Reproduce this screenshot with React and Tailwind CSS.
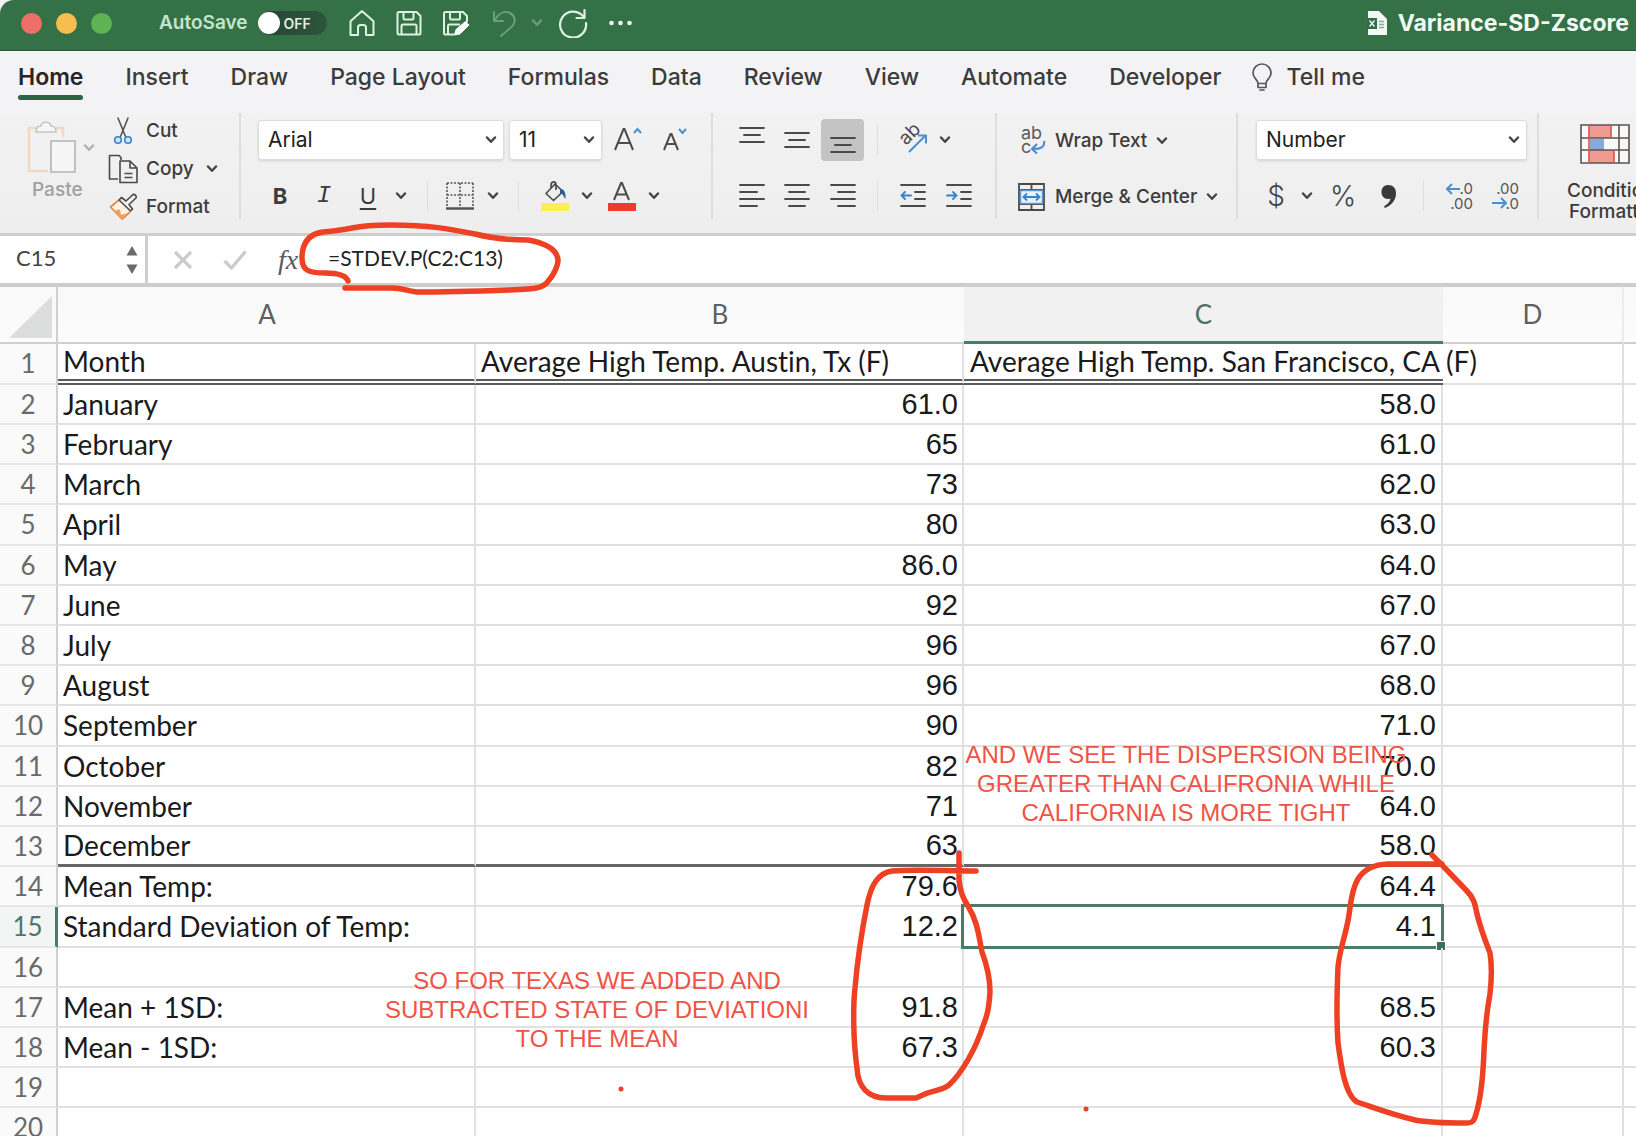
import React from "react";

const TABS = ["Home", "Insert", "Draw", "Page Layout", "Formulas", "Data", "Review", "View", "Automate", "Developer"];

const ROWS = [
  ["January", "61.0", "58.0"],
  ["February", "65", "61.0"],
  ["March", "73", "62.0"],
  ["April", "80", "63.0"],
  ["May", "86.0", "64.0"],
  ["June", "92", "67.0"],
  ["July", "96", "67.0"],
  ["August", "96", "68.0"],
  ["September", "90", "71.0"],
  ["October", "82", "70.0"],
  ["November", "71", "64.0"],
  ["December", "63", "58.0"],
  ["Mean Temp:", "79.6", "64.4"],
  ["Standard Deviation of Temp:", "12.2", "4.1"],
  ["", "", ""],
  ["Mean + 1SD:", "91.8", "68.5"],
  ["Mean - 1SD:", "67.3", "60.3"],
  ["", "", ""],
  ["", "", ""],
];

function Chevron({ className = "text-[#444]" }) {
  return (
    <svg viewBox="0 0 12 8" className={`h-2 w-3 shrink-0 ${className}`} fill="none" stroke="currentColor" strokeWidth="2.4" strokeLinecap="round" strokeLinejoin="round">
      <path d="M2 1.5 6 5.800 10 1.5" />
    </svg>
  );
}

function Lines({ rows }) {
  return (
    <svg viewBox="0 0 26 26" className="size-[26px]" stroke="#4a4a4a" strokeWidth="1.8" strokeLinecap="round">
      {rows.map(([y, x1, x2]) => (
        <path key={y} d={`M${x1} ${y}H${x2}`} />
      ))}
    </svg>
  );
}

function IconButton({ label, className = "", children }) {
  return (
    <button type="button" aria-label={label} className={`flex shrink-0 items-center justify-center ${className}`}>
      {children}
    </button>
  );
}

function Combo({ label, options, className }) {
  return (
    <div className={`relative flex h-10 shrink-0 items-center rounded-[3px] border border-[#dcdcdc] bg-white shadow-sm ${className}`}>
      <select aria-label={label} className="h-full w-full appearance-none bg-transparent px-[9px] text-[21px] text-[#222] outline-none">
        {options.map((o) => (
          <option key={o}>{o}</option>
        ))}
      </select>
      <Chevron className="pointer-events-none absolute right-[6px] text-[#444]" />
    </div>
  );
}

function Rule() {
  return <div className="h-[30px] w-px shrink-0 bg-[#dedede]" />;
}

function GroupRule() {
  return <div className="h-[106px] w-0.5 shrink-0 bg-[#dedede]" />;
}

function TitleBar() {
  return (
    <header className="flex h-[51px] shrink-0 items-center rounded-tl-[14px] border-b border-[#2b5a3b] bg-[#357147] pb-1 pl-[21px] text-[#dcf3e2]">
      <div className="flex gap-[14px]">
        <button type="button" aria-label="Close" className="size-[21px] rounded-full bg-[#ee6f66]" />
        <button type="button" aria-label="Minimize" className="size-[21px] rounded-full bg-[#f6be4f]" />
        <button type="button" aria-label="Zoom" className="size-[21px] rounded-full bg-[#5eb353]" />
      </div>
      <span id="autosave" className="ml-[47px] text-[19px] font-semibold text-[#c5e4cd]">AutoSave</span>
      <button type="button" role="switch" aria-checked="false" aria-labelledby="autosave" className="ml-[10px] flex h-6 w-[69px] items-center gap-1 rounded-full bg-linear-to-r from-[#2a4335] to-[#2c553b]">
        <span className="size-[22px] rounded-full bg-white" />
        <span className="text-[14px] font-semibold text-[#dfeee3]">OFF</span>
      </button>
      <div className="ml-[20px] flex items-center">
        <IconButton label="Home" className="w-[31px]">
          <svg viewBox="0 0 28 28" className="size-7" fill="none" stroke="currentColor" strokeWidth="2" strokeLinejoin="round">
            <path d="M2.5 12.2 14 2l11.500 10.200V26H18v-7.500a2.500 2.500 0 0 0-2.500-2.500h-3a2.500 2.500 0 0 0-2.500 2.500V26H2.500z" />
          </svg>
        </IconButton>
        <IconButton label="Save" className="ml-[16px] w-[31px]">
          <svg viewBox="0 0 28 28" className="size-7" fill="none" stroke="currentColor" strokeWidth="2" strokeLinejoin="round">
            <path d="M2.500 4.500a1.500 1.500 0 0 1 1.500-1.500h17.500L25.500 7v17a1.500 1.500 0 0 1-1.500 1.500H4a1.500 1.500 0 0 1-1.500-1.500z" />
            <path d="M8.500 3v6.500a1 1 0 0 0 1 1h8a1 1 0 0 0 1-1V3M6.500 25.500v-8.500a1.500 1.500 0 0 1 1.500-1.500h12a1.500 1.500 0 0 1 1.500 1.500v8.500" />
          </svg>
        </IconButton>
        <IconButton label="Save As" className="ml-[16px] w-[31px]">
          <svg viewBox="0 0 28 28" className="size-7" fill="none" stroke="currentColor" strokeWidth="2" strokeLinejoin="round">
            <path d="M12 25.500H3.500A1.500 1.500 0 0 1 2 24V4.500A1.500 1.500 0 0 1 3.500 3H21l4 4v6" />
            <path d="M8 3v6.500a1 1 0 0 0 1 1h8a1 1 0 0 0 1-1V3M6 25.500v-8.500a1.500 1.500 0 0 1 1.500-1.500H18" />
            <path d="m12.500 26 1.500-5.500L23.500 12.500l3.500 3.500L18 25z" fill="white" stroke="white" strokeWidth="1" />
          </svg>
        </IconButton>
        <IconButton label="Undo" className="ml-[19px] w-7 text-[#6a9f79]">
          <svg viewBox="0 0 28 28" className="size-7" fill="none" stroke="currentColor" strokeWidth="2" strokeLinecap="round" strokeLinejoin="round">
            <path d="M3 3v9h9M3.500 11.500C8 3.500 14 1.500 19 4s6.500 9 2 13.500L10 27" />
          </svg>
        </IconButton>
        <IconButton label="Undo options" className="ml-[12px] w-3">
          <Chevron className="text-[#6a9f79]" />
        </IconButton>
        <IconButton label="Redo" className="ml-[15px] w-[30px]">
          <svg viewBox="0 0 30 30" className="size-[30px]" fill="none" stroke="currentColor" strokeWidth="2.200" strokeLinecap="round" strokeLinejoin="round">
            <path d="M26 9.500A13 13 0 1 0 28 15M26.500 2v8H18.500" />
          </svg>
        </IconButton>
        <IconButton label="More commands" className="ml-[20px] w-[26px]">
          <svg viewBox="0 0 26 6" className="h-1.5 w-[26px]" fill="#f2fbf4">
            <circle cx="3.500" cy="3" r="2.300" />
            <circle cx="12.500" cy="3" r="2.300" />
            <circle cx="21.500" cy="3" r="2.300" />
          </svg>
        </IconButton>
      </div>
      <div className="ml-auto flex shrink-0 items-center gap-[10px]">
        <svg viewBox="0 0 21 26" className="h-[26px] w-[21px]">
          <path d="M1 1h11l8 8v16H1z" fill="#f1f8f3" />
          <path d="M0 8h10v11H0z" fill="#2f6d49" />
          <path d="m2.500 10.500 5 6m0-6-5 6" stroke="#e4f2e8" strokeWidth="1.500" />
          <path d="M12 11.500h5M12 14.500h5M12 17.500h5" stroke="#7fb192" strokeWidth="1.500" />
        </svg>
        <span className="pr-[7px] text-[23px] font-bold text-[#f1faf3]">Variance-SD-Zscore</span>
      </div>
    </header>
  );
}

function Tabs() {
  return (
    <nav className="flex h-[62px] shrink-0 items-start gap-[42px] pl-[18px] pt-[9px] text-[23px] font-medium text-[#3b3b3b]">
      {TABS.map((t, i) => (
        <a
          key={t}
          href="#ribbon"
          className={i === 0 ? "flex shrink-0 flex-col font-semibold text-[#262626]" : "shrink-0"}
        >
          {t}
          {i === 0 && <span className="h-[5px] rounded-full bg-[#2c6544]" />}
        </a>
      ))}
      <a href="#tellme" className="-ml-[13px] flex shrink-0 items-center gap-[14px]">
        <svg viewBox="0 0 22 28" className="h-7 w-[22px]" fill="none" stroke="#555" strokeWidth="1.700" strokeLinecap="round" strokeLinejoin="round">
          <path d="M7 20.500c0-4-5-5-5-10.500a9 9 0 0 1 18 0c0 5.500-5 6.500-5 10.500zM7 20.500v4h8v-4M9 27h4" />
        </svg>
        Tell me
      </a>
    </nav>
  );
}

function Clipboard() {
  return (
    <div className="flex h-[120px] w-[239px] shrink-0 pl-[25px]">
      <button type="button" className="flex w-[64px] flex-col items-start pt-[7px] text-[19px] font-medium text-[#a0a0a0]">
        <span className="flex items-center gap-[6px]">
          <svg viewBox="0 0 52 56" className="h-14 w-[52px]" fill="none" strokeWidth="1.600">
            <path d="M12 8H4v43h19M31 8h7v9" stroke="#f0d9c0" strokeWidth="2.500" />
            <path d="M11 12c0-4 2-6 5-6 1-5 9-5 10 0 3 0 5 2 5 6z" fill="#f7f7f7" stroke="#c6c6c6" />
            <path d="M26 21h24v31H26z" fill="#f5f5f5" stroke="#b4b4b4" />
          </svg>
          <Chevron className="text-[#b0b0b0]" />
        </span>
        <span className="pl-[7px]">Paste</span>
      </button>
      <div className="ml-[19px] flex flex-col text-[19px] font-medium text-[#3c3c3c]">
        <button type="button" className="flex h-9 items-center gap-2">
          <svg viewBox="0 0 30 30" className="size-[30px]" fill="none" strokeWidth="1.600" strokeLinecap="round">
            <path d="M10 2l7.500 18.500M20 2l-7.500 18.500" stroke="#555" />
            <circle cx="10" cy="24" r="3.300" stroke="#3a82c8" fill="#cfe5fa" />
            <circle cx="20" cy="24" r="3.300" stroke="#3a82c8" fill="#cfe5fa" />
          </svg>
          Cut
        </button>
        <button type="button" className="flex h-10 items-center gap-2">
          <svg viewBox="0 0 30 30" className="size-[30px]" fill="none" stroke="#4a4a4a" strokeWidth="1.600" strokeLinejoin="round">
            <path d="M10 25H1.500V1.500H11l2 2V6" />
            <path d="M12 7h10l7 7v14.500H12zM22 7v7h7M16.500 19.500h8M16.500 23.500h8" />
          </svg>
          Copy
          <Chevron className="ml-1 text-[#444]" />
        </button>
        <button type="button" className="flex h-9 items-center gap-2">
          <svg viewBox="0 0 30 30" className="size-[30px]" fill="none" strokeWidth="1.700" strokeLinejoin="round">
            <path d="M11 8 2.500 15 14 27l8-7" stroke="#e8893c" fill="#fff3e6" />
            <path d="M6 18.500l6-1 1 5.500 5-2-4 6z" fill="#f0a25c" />
            <path d="m11 8 11.500 11 2-2-3.500-4.500L28 6c1-2-1.500-4.500-3.500-3L18 9l-4.500-3.500z" stroke="#4d4d4d" fill="#f2f2f2" />
          </svg>
          Format
        </button>
      </div>
    </div>
  );
}

function FontGroup() {
  return (
    <div className="flex w-[470px] shrink-0 flex-col pl-[17px] pt-[7px]">
      <div className="flex items-center">
        <Combo label="Font" options={["Arial"]} className="w-[246px]" />
        <Combo label="Font size" options={["11"]} className="ml-[5px] w-[93px]" />
        <IconButton label="Increase font size" className="ml-[11px] w-[30px]">
          <svg viewBox="0 0 30 30" className="size-[30px]" fill="none" strokeWidth="2">
            <path d="M2 25 10.500 4h1L20 25M5 18h12" stroke="#4c4c4c" />
            <path d="m21 8 3.500-4L28 8" stroke="#4a8fd0" />
          </svg>
        </IconButton>
        <IconButton label="Decrease font size" className="ml-[18px] w-[30px]">
          <svg viewBox="0 0 30 30" className="size-[30px]" fill="none" strokeWidth="2">
            <path d="M3 25 9.500 9h1L17 25M5.500 19h9" stroke="#4c4c4c" />
            <path d="m18 4 3.500 4L25 4" stroke="#4a8fd0" />
          </svg>
        </IconButton>
      </div>
      <div className="mt-[15px] flex h-[42px] items-center text-[22px] text-[#3c3c3c]">
        <IconButton label="Bold" className="w-[44px] font-bold">B</IconButton>
        <IconButton label="Italic" className="w-[44px] font-['Liberation_Mono'] text-[24px] italic">I</IconButton>
        <IconButton label="Underline" className="w-[44px] underline underline-offset-4">U</IconButton>
        <IconButton label="Underline options" className="w-[22px]"><Chevron /></IconButton>
        <div className="ml-[15px]"><Rule /></div>
        <IconButton label="Borders" className="ml-[18px] w-[28px]">
          <svg viewBox="0 0 28 28" className="size-7" fill="none" stroke="#555" strokeWidth="1.600">
            <path d="M1 1h26M1 1v24M27 1v24M14 1v24M1 13h26" strokeDasharray="2 1.500" />
            <path d="M0 26.500h28" strokeWidth="2.500" />
          </svg>
        </IconButton>
        <IconButton label="Border options" className="ml-[13px] w-3"><Chevron /></IconButton>
        <div className="ml-[19px]"><Rule /></div>
        <IconButton label="Fill color" className="ml-[21px] w-[30px]">
          <svg viewBox="0 0 30 30" className="size-[30px]" fill="none" strokeWidth="1.700" strokeLinejoin="round">
            <path d="m15 3-9 9.500 7.500 7L23 10.500zM11 8V4.500C11 0 16 0 16 3v6" stroke="#4c4c4c" />
            <path d="M20 8c4 0 6 3 5.500 10-2-2-2-5-5.500-6z" fill="#2f5c94" />
            <path d="M1 22h28v8H1z" fill="#fbf04f" />
          </svg>
        </IconButton>
        <IconButton label="Fill color options" className="ml-[11px] w-3"><Chevron /></IconButton>
        <IconButton label="Font color" className="ml-[14px] w-[30px]">
          <svg viewBox="0 0 30 30" className="size-[30px]" fill="none" strokeWidth="2">
            <path d="M7 19 14 2h1l7 17M9.500 13.500h10" stroke="#4c4c4c" />
            <path d="M1 22h28v8H1z" fill="#ee3b2e" />
          </svg>
        </IconButton>
        <IconButton label="Font color options" className="ml-[11px] w-3"><Chevron /></IconButton>
      </div>
    </div>
  );
}

function AlignGroup() {
  return (
    <div className="flex w-[282px] shrink-0 flex-col pl-[17px] pt-[6px]">
      <div className="flex h-[42px] items-center">
        <IconButton label="Top align" className="w-[43px]"><Lines rows={[[1, 1, 25], [8, 5, 21], [15, 1, 25]]} /></IconButton>
        <IconButton label="Middle align" className="w-[48px]"><Lines rows={[[6, 1, 25], [13, 5, 21], [20, 1, 25]]} /></IconButton>
        <IconButton label="Bottom align" className="h-[42px] w-[43px] rounded-[4px] bg-[#c4c4c4]"><Lines rows={[[11, 1, 25], [18, 5, 21], [25, 1, 25]]} /></IconButton>
        <div className="ml-[13px]"><Rule /></div>
        <IconButton label="Orientation" className="ml-[20px] w-[32px]">
          <svg viewBox="0 0 32 32" className="size-8" fill="none">
            <text x="8" y="22" transform="rotate(-45 8 22)" fontSize="19" fill="#4c4c4c" className="font-['Inter']">ab</text>
            <path d="M11 28 27 12M20 11.500H28V19.500" stroke="#4a8fd0" strokeWidth="2" />
          </svg>
        </IconButton>
        <IconButton label="Orientation options" className="ml-[9px] w-3"><Chevron /></IconButton>
      </div>
      <div className="mt-[14px] flex h-[42px] items-center">
        <IconButton label="Align left" className="w-[43px]"><Lines rows={[[2, 1, 25], [9, 1, 18], [16, 1, 25], [23, 1, 18]]} /></IconButton>
        <IconButton label="Align center" className="w-[48px]"><Lines rows={[[2, 1, 25], [9, 5, 21], [16, 1, 25], [23, 5, 21]]} /></IconButton>
        <IconButton label="Align right" className="w-[43px]"><Lines rows={[[2, 1, 25], [9, 8, 25], [16, 1, 25], [23, 8, 25]]} /></IconButton>
        <div className="ml-[13px]"><Rule /></div>
        <IconButton label="Decrease indent" className="ml-[21px] w-[28px]">
          <svg viewBox="0 0 26 26" className="size-[26px]" fill="none" strokeWidth="1.800" strokeLinecap="round">
            <path d="M1 2h24M15 9h10M15 16h10M1 23h24" stroke="#4a4a4a" />
            <path d="M11 12.500H1.500M5 9l-3.500 3.500L5 16" stroke="#3a82c8" />
          </svg>
        </IconButton>
        <IconButton label="Increase indent" className="ml-[18px] w-[28px]">
          <svg viewBox="0 0 26 26" className="size-[26px]" fill="none" strokeWidth="1.800" strokeLinecap="round">
            <path d="M1 2h24M15 9h10M15 16h10M1 23h24" stroke="#4a4a4a" />
            <path d="M1 12.500h9.500M7 9l3.500 3.500L7 16" stroke="#3a82c8" />
          </svg>
        </IconButton>
      </div>
    </div>
  );
}

function WrapGroup() {
  return (
    <div className="flex w-[239px] shrink-0 flex-col pl-[19px] pt-[7px] text-[19px] font-medium text-[#3c3c3c]">
      <button type="button" className="flex h-[42px] items-center gap-[9px]">
        <svg viewBox="0 0 30 30" className="size-[30px]" fill="none">
          <text x="5" y="13" fontSize="18" fill="#5c5c5c" fontWeight="400">ab</text>
          <text x="5" y="27" fontSize="18" fill="#5c5c5c" fontWeight="400">c</text>
          <path d="M28 15c1 6-3 8-11 8M21 18l-5 5 5 4.500" stroke="#4a8fd0" strokeWidth="2.200" />
        </svg>
        Wrap Text
        <Chevron />
      </button>
      <button type="button" className="mt-[14px] flex h-[42px] items-center gap-[9px]">
        <svg viewBox="0 0 30 30" className="size-[30px]" fill="none" strokeWidth="1.800">
          <path d="M3 2h25v26H3zM3 8h25M3 22h25M15.500 2v6M15.500 22v6" stroke="#4a4a4a" />
          <path d="M4.500 8.500h22v13h-22z" fill="#e6f2fd" stroke="#5a9bd8" strokeWidth="1.500" />
          <path d="M7.500 15h16M11 11.500 7.500 15l3.500 3.500M20 11.500l3.500 3.500-3.500 3.500" stroke="#3a82c8" />
        </svg>
        Merge &amp; Center
        <Chevron />
      </button>
    </div>
  );
}

function NumberGroup() {
  return (
    <div className="flex w-[299px] shrink-0 flex-col pl-[18px] pt-[7px]">
      <Combo label="Number format" options={["Number"]} className="w-[271px]" />
      <div className="mt-[15px] flex h-[42px] items-center font-light text-[#444]">
        <IconButton label="Currency" className="ml-[8px] w-[24px] text-[28px]">$</IconButton>
        <IconButton label="Currency options" className="ml-[12px] w-[14px]"><Chevron /></IconButton>
        <IconButton label="Percent" className="ml-[13px] w-[32px] text-[28px]">%</IconButton>
        <IconButton label="Comma style" className="ml-[21px] w-[18px]">
          <svg viewBox="0 0 18 26" className="h-[26px] w-[18px]" fill="#3a3a3a">
            <path d="M8 2c5 0 8 3 8 8 0 7-4 12-11 15l-1-1.500c4-2.500 6-5 6.500-8C9.500 16 8.500 16 8 16c-4 0-6.500-3-6.500-7S4 2 8 2z" />
          </svg>
        </IconButton>
        <div className="ml-[25px]"><Rule /></div>
        <IconButton label="Increase decimal" className="ml-[21px] w-[30px]">
          <svg viewBox="0 0 30 30" className="size-[30px]" fill="none">
            <path d="M15 8H2M7 3 2 8l5 5" stroke="#4a8fd0" strokeWidth="2" />
            <text x="28" y="13" fontSize="15" textAnchor="end" fill="#555" fontWeight="400">.0</text>
            <text x="28" y="28" fontSize="15" textAnchor="end" fill="#555" fontWeight="400">.00</text>
          </svg>
        </IconButton>
        <IconButton label="Decrease decimal" className="ml-[16px] w-[30px]">
          <svg viewBox="0 0 30 30" className="size-[30px]" fill="none">
            <path d="M1 22h14M10 17l5 5-5 5" stroke="#4a8fd0" strokeWidth="2" />
            <text x="28" y="13" fontSize="15" textAnchor="end" fill="#555" fontWeight="400">.00</text>
            <text x="28" y="28" fontSize="15" textAnchor="end" fill="#555" fontWeight="400">.0</text>
          </svg>
        </IconButton>
      </div>
    </div>
  );
}

function ConditionalGroup() {
  return (
    <button type="button" className="flex shrink-0 flex-col items-start pl-[28px] pt-[11px] text-[19px] leading-[21px] font-medium text-[#3c3c3c]">
      <svg viewBox="0 0 50 40" className="ml-[13px] h-10 w-[50px]" fill="none">
        <path d="M1 1h48v38H1z" fill="#fbf8f8" />
        <path d="M9 1h22v13H9zM9 26h25v13H9z" fill="#f19a92" />
        <path d="M10 15h14v11H10z" fill="#86a9dc" />
        <path d="M1 1h48v38H1zM1 14h48M1 26h48M39 1v38" stroke="#555" strokeWidth="1.600" />
        <path d="M9 1v38M31 1v13M34 26v13" stroke="#d9534a" strokeWidth="1.600" />
      </svg>
      <span className="mt-4">Conditional</span>
      <span className="pl-[2px]">Formatting</span>
    </button>
  );
}

function FormulaBar() {
  return (
    <div className="flex h-[54px] shrink-0 items-stretch border-t-[3px] border-b-[4px] border-t-[#cfcfcf] border-b-[#cdcdcd] bg-white">
      <div className="flex w-[148px] shrink-0 items-center justify-between border-r-[3px] border-[#cfcfcf] pr-[7px] pl-4">
        <input aria-label="Name box" defaultValue="C15" className="h-9 w-20 bg-transparent pb-1 font-['Lato'] text-[22px] text-[#444] outline-none" />
        <svg viewBox="0 0 12 30" className="h-[30px] w-3" fill="#6b6b6b">
          <path d="M6 1l5.500 9.500H.5zM6 29 .5 19.500h11z" />
        </svg>
      </div>
      <IconButton label="Cancel" className="ml-[25px] w-5">
        <svg viewBox="0 0 20 20" className="size-5" stroke="#cbcbcb" strokeWidth="3.200"><path d="m2 2 16 16M18 2 2 18" /></svg>
      </IconButton>
      <IconButton label="Enter" className="ml-[30px] w-6">
        <svg viewBox="0 0 24 20" className="h-5 w-6" fill="none" stroke="#cbcbcb" strokeWidth="3.200"><path d="m1.500 11 7 7L22.500 1.500" /></svg>
      </IconButton>
      <IconButton label="Insert function" className="ml-[28px] w-[26px] font-['Liberation_Serif'] text-[28px] text-[#5a5a5a] italic">fx</IconButton>
      <input aria-label="Formula" defaultValue="=STDEV.P(C2:C13)" className="ml-[27px] min-w-0 flex-1 bg-transparent pb-1 font-['Lato'] text-[21px] text-[#222] outline-none" />
    </div>
  );
}

const GRID = "border-r-2 border-b-2 border-[#e0e0e0]";

function Sheet() {
  return (
    <table className="w-full table-fixed border-separate border-spacing-0 bg-white font-['Lato'] text-[28px] leading-[35px] text-[#1a1a1a] [font-variant-ligatures:none]">
      <colgroup>
        <col className="w-[58px]" />
        <col className="w-[418px]" />
        <col className="w-[488px]" />
        <col className="w-[479px]" />
        <col className="w-[181px]" />
        <col />
      </colgroup>
      <thead>
        <tr className="h-[57px] bg-linear-to-b from-[#f8f8f8] to-[#fcfcfc] text-[26px] text-[#5f5f5f]">
          <th scope="col" aria-label="Select all" className="border-r-2 border-b-2 border-[#cfcfcf] p-0">
            <svg viewBox="0 0 56 55" className="h-[55px] w-14"><path d="M52 9v42H9z" fill="#dcdedd" /></svg>
          </th>
          <th scope="col" className="border-b-2 border-[#cfcfcf] p-0 font-normal">A</th>
          <th scope="col" className="border-b-2 border-[#cfcfcf] p-0 font-normal">B</th>
          <th scope="col" className="border-b-[3px] border-[#4a7c68] bg-[#f1f1f1] p-0 font-normal text-[#4f6f64]">C</th>
          <th scope="col" className="border-r-2 border-b-2 border-r-[#ececec] border-b-[#cfcfcf] p-0 font-normal">D</th>
          <th aria-label="E" className="border-b-2 border-[#cfcfcf] p-0" />
        </tr>
      </thead>
      <tbody>
        <tr className="h-[41px]">
          <th scope="row" className="border-r-2 border-b-2 border-r-[#cfcfcf] border-b-[#e6e6e6] bg-[#fafafa] p-0 text-[26px] font-normal text-[#6a6a6a]">1</th>
          <td className="border-r-2 border-b-6 border-r-[#e0e0e0] border-b-[#5a5a5a] border-double p-0 pl-[5px] [border-right-style:solid]">Month</td>
          <td className="border-r-2 border-b-6 border-r-[#e0e0e0] border-b-[#5a5a5a] border-double p-0 pl-[5px] [border-right-style:solid]">Average High Temp. Austin, Tx (F)</td>
          <td className="border-b-6 border-[#5a5a5a] border-double p-0 pl-[6px] whitespace-nowrap">Average High Temp. San Francisco, CA (F)</td>
          <td className={GRID} />
          <td className="border-b-2 border-[#e0e0e0]" />
        </tr>
        {ROWS.map(([name, b, c], i) => {
          const n = i + 2;
          const selected = n === 15;
          const last = n === 13;
          const cell = last ? "border-r-2 border-b-3 border-r-[#e0e0e0] border-b-[#666]" : GRID;
          return (
            <tr key={n} className={n % 5 === 0 ? "h-[41px]" : "h-10"}>
              <th
                scope="row"
                className={
                  selected
                    ? "border-r-3 border-b-2 border-r-[#4a7c68] border-b-[#e6e6e6] bg-[#f3f5f4] p-0 text-[26px] font-normal text-[#4f7567]"
                    : "border-r-2 border-b-2 border-r-[#cfcfcf] border-b-[#e6e6e6] bg-[#fafafa] p-0 text-[26px] font-normal text-[#6a6a6a]"
                }
              >
                {n}
              </th>
              <td className={`p-0 pl-[5px] ${cell}`}>{name}</td>
              <td className={`p-0 pr-[4px] text-right font-['Liberation_Sans'] text-[29px] ${cell}`}>{b}</td>
              <td className={`relative p-0 pr-[5px] text-right font-['Liberation_Sans'] text-[29px] ${cell}`}>
                {c}
                {selected && (
                  <span className="absolute -top-[3px] -right-[3px] -bottom-[3px] -left-[3px] border-3 border-[#4a7c68]">
                    <span className="absolute -right-[5px] -bottom-[5px] size-[10px] border border-white bg-[#3d7059]" />
                  </span>
                )}
              </td>
              <td className={`p-0 ${last ? "border-r-2 border-b-2 border-[#e0e0e0]" : GRID}`} />
              <td className="border-b-2 border-[#e0e0e0] p-0" />
            </tr>
          );
        })}
      </tbody>
    </table>
  );
}

function Markup() {
  return (
    <div className="pointer-events-none absolute top-0 left-0 font-['Liberation_Sans'] text-2xl leading-[29px] text-[#ee5446]">
      <svg viewBox="0 0 1636 1136" className="h-[1136px] w-[1636px]" fill="none" stroke="#ee4023" strokeWidth="5.500" strokeLinecap="round" strokeLinejoin="round">
        <path d="M348 281C346 275 336 273 325 273C308 273 302 270 302 258C302 243 309 234 323 232C334 231 342 230 352 228C366 225 378 225 390 225C430 225 450 229 475 234C495 239 512 240 528 240C545 243 557 249 558 260C558 266 553 276 549 280C544 288 538 289 509 290C480 291 450 292 417 292C408 291 402 288 392 288H345" />
        <path d="M959 853V880C960 892 964 900 968 906C978 922 979 938 982 952C988 968 990 980 990 992C989 1006 988 1014 983 1026C976 1048 962 1073 949 1085C941 1091 931 1091 925 1094L916 1098H886C868 1098 858 1087 857 1068C853 1040 853 1006 855 988C857 965 861 935 867 905C871 885 878 873 892 871C915 869 945 871 976 871" />
        <path d="M1432 855 1442 865 1466 890C1474 898 1475 904 1477 914C1481 930 1485 940 1490 953C1492 965 1492 976 1490 994C1487 1010 1485 1030 1484 1050C1483 1080 1481 1098 1476 1114C1474 1122 1472 1123 1466 1123C1450 1123 1430 1123 1415 1120C1390 1114 1375 1108 1357 1102C1345 1095 1341 1065 1338 1043C1336 1015 1337 990 1338 967C1340 947 1346 935 1349 915C1352 895 1352 865 1388 864H1442" />
        <circle cx="621" cy="1089" r="2.500" fill="#ee4023" stroke="none" />
        <circle cx="1086" cy="1109" r="2.500" fill="#ee4023" stroke="none" />
      </svg>
      <p className="absolute top-[966px] left-[377px] w-[440px] text-center">
        SO FOR TEXAS WE ADDED AND<br />SUBTRACTED STATE OF DEVIATIONI<br />TO THE MEAN
      </p>
      <p className="absolute top-[740px] left-[956px] w-[460px] text-center">
        AND WE SEE THE DISPERSION BEING<br />GREATER THAN CALIFRONIA WHILE<br />CALIFORNIA IS MORE TIGHT
      </p>
    </div>
  );
}

export default function App() {
  return (
    <div className="relative flex h-screen flex-col overflow-hidden bg-[#f3f2f4] font-['Inter',sans-serif] antialiased">
      <TitleBar />
      <Tabs />
      <section id="ribbon" aria-label="Home ribbon" className="flex h-[120px] shrink-0 overflow-hidden bg-linear-to-b from-[#f3f2f3] to-[#eeeeee]">
        <Clipboard />
        <GroupRule />
        <FontGroup />
        <GroupRule />
        <AlignGroup />
        <GroupRule />
        <WrapGroup />
        <GroupRule />
        <NumberGroup />
        <GroupRule />
        <ConditionalGroup />
      </section>
      <FormulaBar />
      <main className="min-h-0 flex-1 overflow-hidden">
        <Sheet />
      </main>
      <Markup />
    </div>
  );
}
